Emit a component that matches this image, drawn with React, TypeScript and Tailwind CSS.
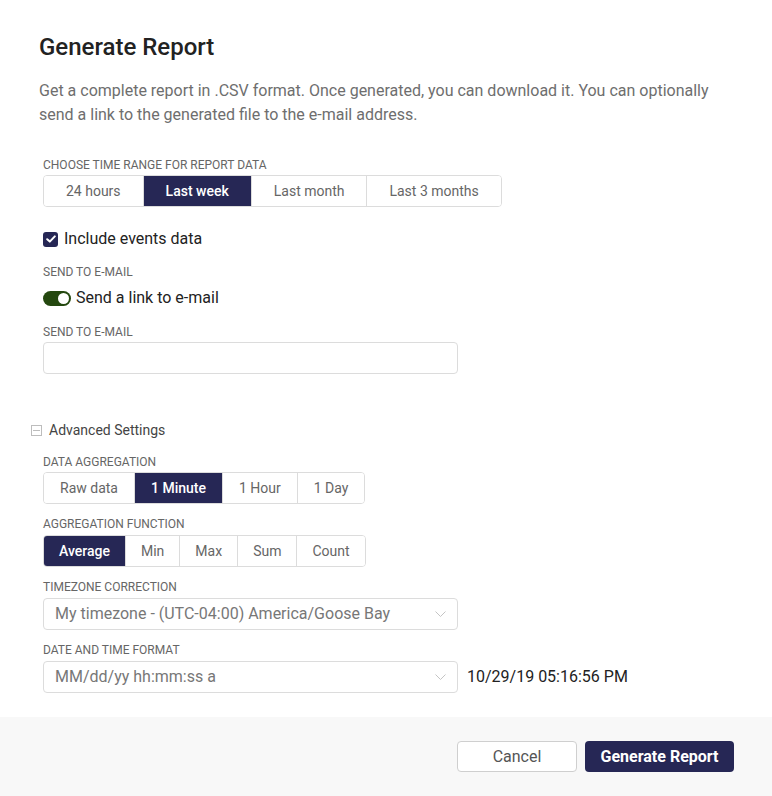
import React, { useState } from "react";

type SegmentedProps = {
  options: string[];
  value: string;
  onChange: (v: string) => void;
  pad: string;
};

function Segmented({ options, value, onChange, pad }: SegmentedProps) {
  return (
    <div className="flex w-fit h-8 rounded border border-[#dcdcdc] overflow-hidden">
      {options.map((opt, i) => {
        const active = opt === value;
        return (
          <button
            key={opt}
            onClick={() => onChange(opt)}
            className={`${pad} text-sm leading-none ${
              i > 0 ? "border-l border-[#dcdcdc]" : ""
            } ${
              active
                ? "bg-[#262755] text-white font-medium border-[#262755]"
                : "bg-white text-[#666]"
            }`}
          >
            {opt}
          </button>
        );
      })}
    </div>
  );
}

function Label({ children, className = "" }: { children: React.ReactNode; className?: string }) {
  return (
    <div className={`text-xs leading-4 uppercase text-[#666] ${className}`}>
      {children}
    </div>
  );
}

function Chevron() {
  return (
    <svg width="11" height="6" viewBox="0 0 11 6" fill="none">
      <path d="M0.5 0.5 L5.5 5.5 L10.5 0.5" stroke="#c4c4c4" strokeWidth="1" />
    </svg>
  );
}

function SelectBox({ value }: { value: string }) {
  return (
    <div className="flex items-center justify-between w-[415px] h-8 rounded border border-[#dcdcdc] bg-white pl-[11px] pr-[11px]">
      <span className="text-base text-[#777]">{value}</span>
      <Chevron />
    </div>
  );
}

export default function App() {
  const [range, setRange] = useState("Last week");
  const [agg, setAgg] = useState("1 Minute");
  const [fn, setFn] = useState("Average");
  const [events, setEvents] = useState(true);
  const [sendLink, setSendLink] = useState(true);

  return (
    <div className="w-[772px] h-[796px] bg-white flex flex-col font-[Roboto,sans-serif]">
      <div className="px-[39px] pt-[33px]">
        <h1 className="text-2xl leading-7 font-medium text-[#222]">Generate Report</h1>
        <p className="mt-[18px] text-base leading-6 text-[#6e6e6e]">
          Get a complete report in .CSV format. Once generated, you can download it. You can optionally
          send a link to the generated file to the e-mail address.
        </p>

        <div className="ml-1">
          <Label className="mt-[30px]">Choose time range for report data</Label>
          <div className="mt-[2px]">
            <Segmented
              options={["24 hours", "Last week", "Last month", "Last 3 months"]}
              value={range}
              onChange={setRange}
              pad="px-[22px]"
            />
          </div>

          <label className="mt-[20px] flex items-center h-6 cursor-pointer" onClick={() => setEvents(!events)}>
            <span
              className={`w-[15px] h-[15px] rounded-[3px] flex items-center justify-center ${
                events ? "bg-[#262755]" : "border border-[#bbb] bg-white"
              }`}
            >
              {events && (
                <svg width="10" height="8" viewBox="0 0 10 8" fill="none">
                  <path d="M1.2 4.2 L3.8 6.6 L8.8 1.4" stroke="white" strokeWidth="2" strokeLinecap="round" strokeLinejoin="round" />
                </svg>
              )}
            </span>
            <span className="ml-[6px] text-base text-[#222]">Include events data</span>
          </label>

          <Label className="mt-[13px]">Send to e-mail</Label>
          <div className="mt-[6px] flex items-center h-6 cursor-pointer" onClick={() => setSendLink(!sendLink)}>
            <span
              className={`w-[28px] h-[15px] rounded-full flex items-center px-[2px] ${
                sendLink ? "bg-[#24480f] justify-end" : "bg-[#ccc] justify-start"
              }`}
            >
              <span className="w-[11px] h-[11px] rounded-full bg-white" />
            </span>
            <span className="ml-[5px] text-base text-[#222]">Send a link to e-mail</span>
          </div>

          <Label className="mt-[14px]">Send to e-mail</Label>
          <input
            type="email"
            className="mt-[2px] w-[415px] h-8 rounded border border-[#dcdcdc] px-3 text-base outline-none"
          />
        </div>

        <div className="mt-[46px] -ml-2 flex items-center h-5">
          <span className="w-[11px] h-[11px] border border-[#bdbdbd] flex items-center justify-center">
            <span className="w-[7px] h-px bg-[#bdbdbd]" />
          </span>
          <span className="ml-[7px] text-sm text-[#444]">Advanced Settings</span>
        </div>

        <div className="ml-1">
          <Label className="mt-[14px]">Data aggregation</Label>
          <div className="mt-[2px]">
            <Segmented
              options={["Raw data", "1 Minute", "1 Hour", "1 Day"]}
              value={agg}
              onChange={setAgg}
              pad="px-4"
            />
          </div>

          <Label className="mt-[12px]">Aggregation function</Label>
          <div className="mt-[3px]">
            <Segmented
              options={["Average", "Min", "Max", "Sum", "Count"]}
              value={fn}
              onChange={setFn}
              pad="px-[15px]"
            />
          </div>

          <Label className="mt-[12px]">Timezone correction</Label>
          <div className="mt-[3px]">
            <SelectBox value="My timezone - (UTC-04:00) America/Goose Bay" />
          </div>

          <Label className="mt-[12px]">Date and time format</Label>
          <div className="mt-[3px] flex items-center">
            <SelectBox value="MM/dd/yy hh:mm:ss a" />
            <span className="ml-[9px] text-base text-[#222]">10/29/19 05:16:56 PM</span>
          </div>
        </div>
      </div>

      <div className="mt-auto h-[79px] bg-[#f8f8f8] flex justify-end items-start gap-2 pt-6 px-[38px]">
        <button className="w-[120px] h-[31px] rounded border border-[#cfcfcf] bg-white text-base text-[#555]">
          Cancel
        </button>
        <button className="w-[149px] h-[31px] rounded bg-[#262755] text-base font-bold text-white">
          Generate Report
        </button>
      </div>
    </div>
  );
}
